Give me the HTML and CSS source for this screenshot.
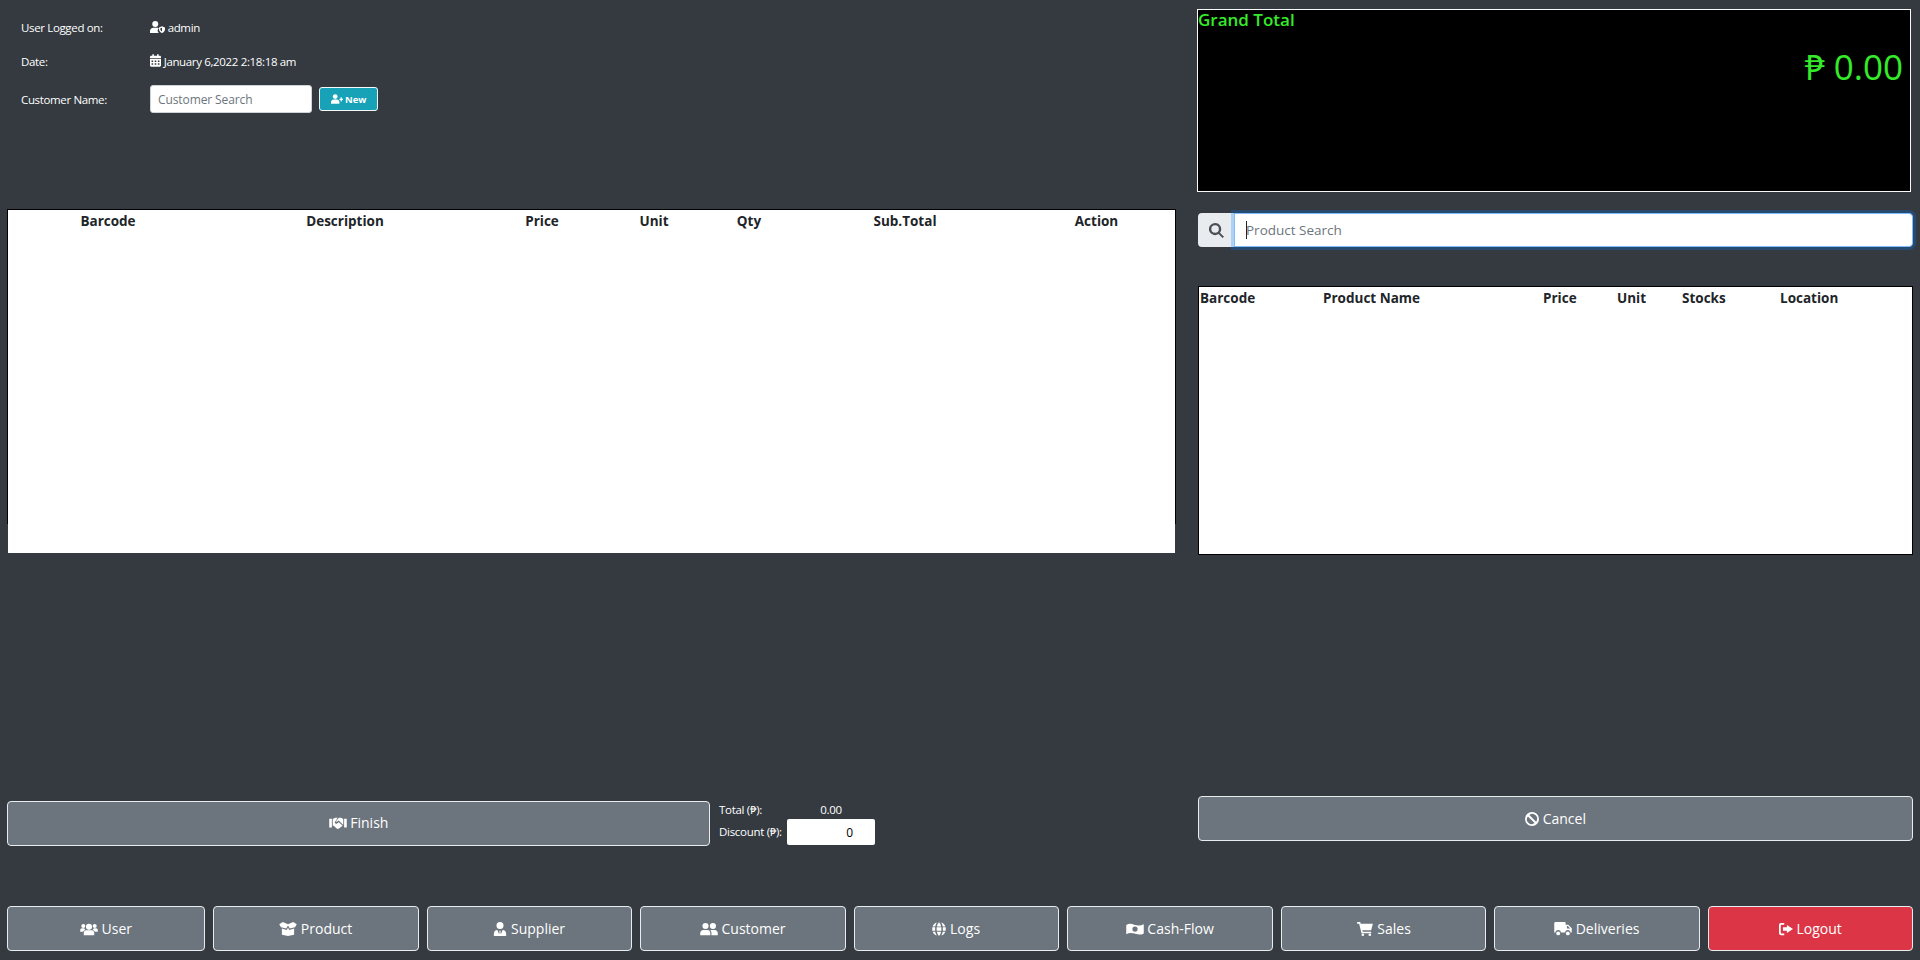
FILE: index.html
```html
<!DOCTYPE html>
<html lang="en">
<head>
    <meta charset="UTF-8">
    <title>POS</title>
    <link rel="stylesheet" href="styles.css">
</head>
<body>
    <div class="page">
        <div class="main">
            <!-- left column -->
            <div class="col-left">
                <div class="info">
                    <div class="info-row">
                        <span class="info-label">User Logged on:</span>
                        <span class="info-value">
                            <svg class="icon icon-admin" viewBox="0 0 20 16"><circle cx="7" cy="4" r="4"/><path d="M0 16v-2.500C0 11 2 9 4.500 9h5c.8 0 1.500.2 2.100.5C10.600 10.500 10 12 10.300 13.500c.2 1 .8 1.900 1.500 2.500z"/><path fill-rule="evenodd" d="M16 7l4 1.500v2.500c0 2.500-1.700 4.200-4 5-2.300-.8-4-2.500-4-5V8.500zM16 9l-2.200.8V11c0 1.400.9 2.400 2.200 3z"/></svg>
                            admin
                        </span>
                    </div>
                    <div class="info-row">
                        <span class="info-label">Date:</span>
                        <span class="info-value">
                            <svg class="icon icon-cal" viewBox="0 0 14 16"><path fill-rule="evenodd" d="M3 0h2v2h4V0h2v2h1.500C13.300 2 14 2.700 14 3.500V5H0V3.500C0 2.700.7 2 1.500 2H3zM0 6h14v8.500c0 .8-.7 1.500-1.500 1.500h-11C.7 16 0 15.300 0 14.500zM2 8v2h2V8zm4 0v2h2V8zm4 0v2h2V8zm-8 3.500v2h2v-2zm4 0v2h2v-2zm4 0v2h2v-2z"/></svg>
                            January 6,2022 2:18:18 am
                        </span>
                    </div>
                    <div class="info-row info-row-customer">
                        <span class="info-label">Customer Name:</span>
                        <input class="customer-input" type="text" placeholder="Customer Search">
                        <button class="btn-new">
                            <svg class="icon icon-new" viewBox="0 0 20 16"><circle cx="7" cy="4" r="4"/><path d="M0 16v-2.500C0 11 2 9 4.500 9h5C12 9 14 11 14 13.500V16z"/><path d="M16 5h2v2.500h2v2h-2V12h-2V9.500h-2v-2h2z"/></svg>
                            New
                        </button>
                    </div>
                </div>

                <div class="cart">
                    <div class="cart-frame">
                        <table class="cart-table">
                            <colgroup>
                                <col class="c1"><col class="c2"><col class="c3"><col class="c4"><col class="c5"><col class="c6"><col>
                            </colgroup>
                            <thead>
                                <tr>
                                    <th>Barcode</th>
                                    <th>Description</th>
                                    <th>Price</th>
                                    <th>Unit</th>
                                    <th>Qty</th>
                                    <th>Sub.Total</th>
                                    <th>Action</th>
                                </tr>
                            </thead>
                            <tbody></tbody>
                        </table>
                    </div>
                    <div class="cart-foot"></div>
                </div>

                <div class="finish-row">
                    <button class="btn btn-finish">
                        <svg class="icon" viewBox="0 0 20 16"><path d="M0 3h3v10H0zM17 3h3v10h-3z"/><path d="M9.500 2H6.800L4 3.500V11l1 .2 3.500 3c.8.700 1.800.700 2.600.2l3.400-2.700.9-.7L10.800 7 9 8.500c-.8.600-1.800.5-2.300-.1-.5-.6-.4-1.500.2-2z"/><path d="M11 2L8 5.500c-.3.400-.2.800.1 1 .3.200.7.200 1-.1l1.700-1.400 5 5 .2-.1V3.500L13.500 2z"/></svg>
                        Finish
                    </button>
                    <div class="totals">
                        <span>Total (₱):</span>
                        <span class="total-value">0.00</span>
                        <span>Discount (₱):</span>
                        <input class="discount-input" type="text" value="0">
                    </div>
                </div>
            </div>

            <!-- right column -->
            <div class="col-right">
                <div class="display">
                    <div class="display-title">Grand Total</div>
                    <div class="display-amount">₱ 0.00</div>
                </div>

                <div class="search">
                    <span class="search-addon">
                        <svg class="icon icon-search" viewBox="0 0 16 16"><path fill-rule="evenodd" d="M6.500 0a6.500 6.500 0 0 1 5.200 10.400l4.300 4.200-1.600 1.400-4.200-4.200A6.500 6.500 0 1 1 6.500 0zm0 2.500a4 4 0 1 0 0 8 4 4 0 0 0 0-8z"/></svg>
                    </span>
                    <input class="search-input" type="text" placeholder="Product Search">
                    <span class="search-caret"></span>
                </div>

                <div class="products">
                    <table class="product-table">
                        <colgroup>
                            <col class="p1"><col class="p2"><col class="p3"><col class="p4"><col class="p5"><col>
                        </colgroup>
                        <thead>
                            <tr>
                                <th>Barcode</th>
                                <th>Product Name</th>
                                <th>Price</th>
                                <th>Unit</th>
                                <th>Stocks</th>
                                <th>Location</th>
                            </tr>
                        </thead>
                        <tbody></tbody>
                    </table>
                </div>

                <button class="btn btn-cancel">
                    <svg class="icon icon-narrow" viewBox="0 0 16 16"><path fill-rule="evenodd" d="M8 0a8 8 0 1 1 0 16A8 8 0 0 1 8 0zM5 3.300l7.700 7.700A5.500 5.500 0 0 0 5 3.300zM3.300 5A5.500 5.500 0 0 0 11 12.700z"/></svg>
                    Cancel
                </button>
            </div>
        </div>

        <!-- bottom menu -->
        <nav class="menu">
            <button class="btn">
                <svg class="icon" viewBox="0 0 20 16"><circle cx="10" cy="5.500" r="3.500"/><circle cx="3.500" cy="4.500" r="2.300"/><circle cx="16.500" cy="4.500" r="2.300"/><path d="M4 15v-2.500C4 10.500 5.500 9.500 7 9.500h6c1.500 0 3 1 3 3V15zM0 11V9c0-1 .8-2 2-2h2.500c.4.900 1 1.600 1.500 2-1.400.4-2.400 1-2.800 2zM20 11V9c0-1-.8-2-2-2h-2.500c-.4.900-1 1.600-1.500 2 1.400.4 2.400 1 2.800 2z"/></svg>
                User
            </button>
            <button class="btn">
                <svg class="icon" viewBox="0 0 20 16"><path d="M0 2.500L4 0l6 2.500L16 0l4 2.500-2 3.500-6 1.500L10 4 8 7.500 2 6z"/><path d="M3 7.500l5.500 1.500L10 6.500V16l-7-1.500zM17 7.500L11.500 9 10 6.500V16l7-1.500z"/></svg>
                Product
            </button>
            <button class="btn">
                <svg class="icon icon-narrow" viewBox="0 0 14 16"><circle cx="7" cy="4" r="4"/><path d="M0 16v-3c0-2.200 1.600-3.800 4-4l2 5 .5-2.500L6 10h2l-.5 1.500L8 14l2-5c2.400.2 4 1.800 4 4v3z"/></svg>
                Supplier
            </button>
            <button class="btn">
                <svg class="icon" viewBox="0 0 20 16"><circle cx="6" cy="4.500" r="3.500"/><circle cx="14.500" cy="4.500" r="3.500"/><path d="M0 15v-2.500C0 10.500 1.700 9 3.500 9h5c1.800 0 3 1.500 3 3.500V15zM12.800 15v-2.500c0-1.300-.5-2.600-1.300-3.500h5c1.900 0 3.500 1.500 3.500 3.500V15z"/></svg>
                Customer
            </button>
            <button class="btn">
                <svg class="icon icon-narrow" viewBox="0 0 16 16"><path d="M5.500.5C4.500 1.800 3.900 3.500 3.700 5H.8C1.500 2.900 3.300 1.100 5.500.5zM10.500.5c2.200.6 4 2.400 4.700 4.500h-2.900c-.2-1.500-.8-3.200-1.800-4.500zM8 .3c1 .8 2 2.600 2.400 4.700H5.600C6 2.900 7 1.100 8 .3zM.3 6h3.300v4H.3zM5.300 6h5.400v4H5.300zM12.400 6h3.300v4h-3.300zM.8 11h2.900c.2 1.500.8 3.200 1.800 4.500C3.300 14.900 1.500 13.100.8 11zM5.600 11h4.800C10 13.100 9 14.900 8 15.700 7 14.900 6 13.100 5.600 11zM12.300 11h2.900c-.7 2.100-2.500 3.900-4.700 4.500 1-1.300 1.600-3 1.800-4.500z"/></svg>
                Logs
            </button>
            <button class="btn">
                <svg class="icon" viewBox="0 0 20 16"><path fill-rule="evenodd" d="M0 3.500C3 1.500 6 2 9 3c3.500 1 7 1.500 11-.5V13c-3 2-6.500 1.500-9.500.5C7 12.500 3.500 12 0 14zM10 5a3 3 0 1 0 0 6 3 3 0 0 0 0-6z"/></svg>
                Cash-Flow
            </button>
            <button class="btn">
                <svg class="icon" viewBox="0 0 18 16"><path d="M0 0h3.500l.6 2H18l-2 7.500H6l.4 1.500H16v1.800H5L2.300 2H0z"/><circle cx="6.500" cy="14.500" r="1.500"/><circle cx="14.500" cy="14.500" r="1.500"/></svg>
                Sales
            </button>
            <button class="btn">
                <svg class="icon" viewBox="0 0 20 16"><path d="M0 1.500C0 .7.700 0 1.500 0H12c.8 0 1 .7 1 1.500V3h3l4 4v5h-1.500a3 3 0 0 0-6 0h-5a3 3 0 0 0-6 0H0zM14.500 4.700V7.500h3.700L15.500 4.700z"/><circle cx="4.500" cy="13" r="2.200"/><circle cx="15.500" cy="13" r="2.200"/></svg>
                Deliveries
            </button>
            <button class="btn btn-logout">
                <svg class="icon icon-narrow" viewBox="0 0 16 16"><path d="M9 3.500L16 8l-7 4.500V10H4.500V6H9z"/><path d="M6 1H2.500C1 1 0 2 0 3.500v9C0 14 1 15 2.500 15H6v-2H3c-.6 0-1-.4-1-1V4c0-.6.4-1 1-1h3z"/></svg>
                Logout
            </button>
        </nav>
    </div>
</body>
</html>
```

FILE: styles.css
```css
* {
    box-sizing: border-box;
}

body {
    margin: 0;
    background-color: #343a40;
    color: #fff;
    font-family: 'Open Sans', 'Noto Sans', sans-serif;
    font-size: 13px;
}

.page {
    height: 960px;
    padding: 0 7px 9px 7px;
    display: flex;
    flex-direction: column;
    overflow: hidden;
}

.main {
    flex: 1;
    display: grid;
    grid-template-columns: 1169px 715px;
    column-gap: 22px;
}

.icon {
    width: 18px;
    height: 14px;
    fill: currentColor;
    vertical-align: -2px;
}

.icon-narrow {
    width: 14px;
}

/* left column */
.col-left {
    display: flex;
    flex-direction: column;
}

.info {
    height: 209px;
    padding: 15px 0 0 14px;
    font-size: 11.5px;
    letter-spacing: -0.35px;
}

.info-row {
    display: flex;
    align-items: center;
    height: 24px;
    margin-bottom: 10px;
}

.info-label {
    width: 129px;
    flex: none;
}

.icon-admin {
    width: 15px;
    height: 12px;
    vertical-align: -1px;
}

.icon-cal {
    width: 11px;
    height: 13px;
    vertical-align: -1px;
}

.info-row-customer {
    height: 28px;
    margin-top: 12px;
}

.customer-input {
    width: 162px;
    height: 28px;
    padding: 0 7px;
    border: 1px solid #ced4da;
    border-radius: 3px;
    background-color: #fff;
    font-family: inherit;
    font-size: 12px;
    letter-spacing: -0.1px;
}

.customer-input::placeholder {
    color: #6c757d;
}

.btn-new {
    width: 59px;
    height: 24px;
    margin-left: 7px;
    padding: 0;
    border: 1px solid #f8f9fa;
    border-radius: 3px;
    background-color: #17a2b8;
    color: #fff;
    font-family: inherit;
    font-size: 9.5px;
    font-weight: 700;
}

.icon-new {
    width: 12px;
    height: 10px;
    vertical-align: -1px;
}

.cart {
    flex: none;
}

.cart-frame {
    height: 315px;
    border: 1px solid #000;
    border-bottom: none;
    background-color: #fff;
}

.cart-foot {
    height: 29px;
    margin: 0 1px;
    background-color: #fff;
}

table {
    width: 100%;
    border-collapse: collapse;
    table-layout: fixed;
    color: #212529;
    font-size: 13.5px;
}

.cart-table th {
    padding: 0;
    height: 21px;
    text-align: center;
}

.c1 { width: 200px; }
.c2 { width: 274px; }
.c3 { width: 120px; }
.c4 { width: 104px; }
.c5 { width: 86px; }
.c6 { width: 226px; }

.finish-row {
    display: flex;
    margin-top: auto;
    margin-bottom: 60px;
    height: 45px;
}

.btn {
    border: 1px solid #e9ecef;
    border-radius: 4px;
    background-color: #6c757d;
    color: #fff;
    font-family: inherit;
    font-size: 14px;
    padding: 0;
}

.btn-finish {
    width: 703px;
    flex: none;
    padding-bottom: 2px;
}

.totals {
    display: grid;
    grid-template-columns: 68px 88px;
    grid-template-rows: 16px 28px;
    margin-left: 9px;
    align-items: center;
    font-size: 11.5px;
    letter-spacing: -0.3px;
}

.total-value {
    text-align: center;
}

.discount-input {
    width: 88px;
    height: 26px;
    align-self: end;
    padding: 0 22px 0 0;
    border: none;
    border-radius: 2px;
    background-color: #fff;
    font-family: inherit;
    font-size: 12px;
    text-align: right;
}

/* right column */
.col-right {
    display: flex;
    flex-direction: column;
}

.display {
    height: 183px;
    width: 714px;
    margin: 9px 0 0 -1px;
    border: 1px solid #f8f9fa;
    background-color: #000;
    color: #35ea2a;
}

.display-title {
    font-size: 17px;
    font-weight: 600;
    line-height: 20px;
}

.display-amount {
    margin-top: 13px;
    padding-right: 7px;
    font-size: 35px;
    line-height: 48px;
    text-align: right;
}

.search {
    position: relative;
    display: flex;
    height: 34px;
    margin-top: 21px;
}

.search-addon {
    width: 36px;
    display: flex;
    align-items: center;
    justify-content: center;
    border-radius: 4px 0 0 4px;
    background-color: #e9ecef;
    color: #495057;
}

.icon-search {
    width: 15px;
    height: 15px;
}

.search-input {
    flex: 1;
    padding: 0 11px;
    border: 1px solid #80bdff;
    border-radius: 0 4px 4px 0;
    outline: none;
    box-shadow: 0 0 0 3px rgba(0, 123, 255, 0.25);
    background-color: #fff;
    font-family: inherit;
    font-size: 13.5px;
}

.search-input::placeholder {
    color: #6c757d;
}

.search-caret {
    position: absolute;
    left: 48px;
    top: 8px;
    width: 1px;
    height: 18px;
    background-color: #212529;
}

.products {
    height: 269px;
    margin-top: 39px;
    border: 1px solid #000;
    background-color: #fff;
}

.product-table th {
    padding: 0 0 0 1px;
    height: 22px;
    text-align: left;
}

.p1 { width: 123px; }
.p2 { width: 220px; }
.p3 { width: 74px; }
.p4 { width: 65px; }
.p5 { width: 98px; }

.btn-cancel {
    height: 45px;
    margin-top: auto;
    margin-bottom: 65px;
}

/* bottom menu */
.menu {
    display: grid;
    grid-template-columns: 198px repeat(8, 1fr);
    column-gap: 8px;
    height: 45px;
    flex: none;
}

.btn-logout {
    background-color: #dc3545;
}
```
